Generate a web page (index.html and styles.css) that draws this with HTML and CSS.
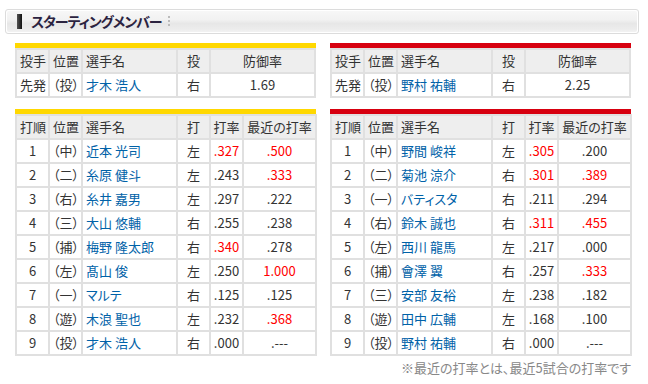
FILE: index.html
```html
<!DOCTYPE html>
<html lang="ja">
<head>
<meta charset="utf-8">
<link rel="stylesheet" href="styles.css">
</head>
<body>
<div class="page">
  <div class="title">
    <div class="title-inner">
      <span class="title-icon"></span>
      <span class="title-text">スターティングメンバー</span>
      <span class="title-dots"></span>
    </div>
  </div>

  <div class="row pitchers">
    <div class="team home">
      <table class="tbl">
        <colgroup><col class="c1"><col class="c2"><col class="c3"><col class="c4"><col class="c5w"></colgroup>
        <tr class="head"><th class="l">投手</th><th class="l">位置</th><th class="l">選手名</th><th>投</th><th>防御率</th></tr>
        <tr><td class="l">先発</td><td class="l">（投）</td><td class="l name">才木 浩人</td><td>右</td><td>1.69</td></tr>
      </table>
    </div>
    <div class="team away">
      <table class="tbl">
        <colgroup><col class="c1"><col class="c2"><col class="c3"><col class="c4"><col class="c5w"></colgroup>
        <tr class="head"><th class="l">投手</th><th class="l">位置</th><th class="l">選手名</th><th>投</th><th>防御率</th></tr>
        <tr><td class="l">先発</td><td class="l">（投）</td><td class="l name">野村 祐輔</td><td>右</td><td>2.25</td></tr>
      </table>
    </div>
  </div>

  <div class="row batters">
    <div class="team home">
      <table class="tbl">
        <colgroup><col class="c1"><col class="c2"><col class="c3"><col class="c4"><col class="c5"><col class="c6"></colgroup>
        <tr class="head"><th class="l">打順</th><th class="l">位置</th><th class="l">選手名</th><th>打</th><th>打率</th><th>最近の打率</th></tr>
        <tr><td>1</td><td class="l">（中）</td><td class="l name">近本 光司</td><td>左</td><td class="red">.327</td><td class="red">.500</td></tr>
        <tr><td>2</td><td class="l">（二）</td><td class="l name">糸原 健斗</td><td>左</td><td>.243</td><td class="red">.333</td></tr>
        <tr><td>3</td><td class="l">（右）</td><td class="l name">糸井 嘉男</td><td>左</td><td>.297</td><td>.222</td></tr>
        <tr><td>4</td><td class="l">（三）</td><td class="l name">大山 悠輔</td><td>右</td><td>.255</td><td>.238</td></tr>
        <tr><td>5</td><td class="l">（捕）</td><td class="l name">梅野 隆太郎</td><td>右</td><td class="red">.340</td><td>.278</td></tr>
        <tr><td>6</td><td class="l">（左）</td><td class="l name">髙山 俊</td><td>左</td><td>.250</td><td class="red">1.000</td></tr>
        <tr><td>7</td><td class="l">（一）</td><td class="l name">マルテ</td><td>右</td><td>.125</td><td>.125</td></tr>
        <tr><td>8</td><td class="l">（遊）</td><td class="l name">木浪 聖也</td><td>左</td><td>.232</td><td class="red">.368</td></tr>
        <tr><td>9</td><td class="l">（投）</td><td class="l name">才木 浩人</td><td>右</td><td>.000</td><td>.---</td></tr>
      </table>
    </div>
    <div class="team away">
      <table class="tbl">
        <colgroup><col class="c1"><col class="c2"><col class="c3"><col class="c4"><col class="c5"><col class="c6"></colgroup>
        <tr class="head"><th class="l">打順</th><th class="l">位置</th><th class="l">選手名</th><th>打</th><th>打率</th><th>最近の打率</th></tr>
        <tr><td>1</td><td class="l">（中）</td><td class="l name">野間 峻祥</td><td>左</td><td class="red">.305</td><td>.200</td></tr>
        <tr><td>2</td><td class="l">（二）</td><td class="l name">菊池 涼介</td><td>右</td><td class="red">.301</td><td class="red">.389</td></tr>
        <tr><td>3</td><td class="l">（一）</td><td class="l name">バティスタ</td><td>右</td><td>.211</td><td>.294</td></tr>
        <tr><td>4</td><td class="l">（右）</td><td class="l name">鈴木 誠也</td><td>右</td><td class="red">.311</td><td class="red">.455</td></tr>
        <tr><td>5</td><td class="l">（左）</td><td class="l name">西川 龍馬</td><td>左</td><td>.217</td><td>.000</td></tr>
        <tr><td>6</td><td class="l">（捕）</td><td class="l name">會澤 翼</td><td>右</td><td>.257</td><td class="red">.333</td></tr>
        <tr><td>7</td><td class="l">（三）</td><td class="l name">安部 友裕</td><td>左</td><td>.238</td><td>.182</td></tr>
        <tr><td>8</td><td class="l">（遊）</td><td class="l name">田中 広輔</td><td>左</td><td>.168</td><td>.100</td></tr>
        <tr><td>9</td><td class="l">（投）</td><td class="l name">野村 祐輔</td><td>右</td><td>.000</td><td>.---</td></tr>
      </table>
      <p class="note">※最近の打率とは、最近5試合の打率です</p>
    </div>
  </div>
</div>
</body>
</html>
```

FILE: styles.css
```css
html, body {
  margin: 0;
  padding: 0;
  background: #fff;
}
body {
  font-family: "Noto Sans CJK JP", "Noto Sans", sans-serif;
  font-size: 13px;
  color: #333;
  font-feature-settings: "palt";
}
.page {
  width: 648px;
  padding-top: 9px;
}
.title {
  margin: 0 9px 0 5px;
  border: 1px solid #dcdcdc;
  border-radius: 3px;
  height: 23px;
  box-sizing: content-box;
  background: #fff;
}
.title-inner {
  height: 21px;
  margin: 1px;
  border-radius: 2px;
  background: linear-gradient(#f7f7f7 0%, #f2f2f2 40%, #e7e7e7 60%, #ececec 85%, #f2f2f2 100%);
  display: flex;
  align-items: center;
}
.title-icon {
  width: 5px;
  height: 15px;
  margin-left: 10px;
  background: linear-gradient(90deg, #555, #111);
}
.title-text {
  margin-left: 9px;
  font-size: 14px;
  font-weight: bold;
  color: #2b2340;
  letter-spacing: -1px;
  line-height: 21px;
}
.title-dots {
  margin-left: 6px;
  width: 2px;
  height: 12px;
  background: repeating-linear-gradient(#bbb 0 2px, transparent 2px 4px);
}
.row {
  display: flex;
  gap: 14px;
  padding-left: 15px;
}
.pitchers {
  margin-top: 9px;
}
.batters {
  margin-top: 11px;
}
.team {
  width: 301px;
  align-self: flex-start;
}
.home {
  border-top: 5px solid #ffd800;
}
.away {
  border-top: 5px solid #d7000f;
}
.tbl {
  border-collapse: collapse;
  table-layout: fixed;
  width: 301px;
}
.c1, .c2, .c4, .c5 { width: 33px; }
.c3 { width: 95px; }
.c5w { width: 105px; }
.c6 { width: 73px; }
.tbl th, .tbl td {
  border: 2px solid #e0e0e0;
  height: 22px;
  padding: 0;
  text-align: center;
  font-weight: normal;
  line-height: 20px;
  white-space: nowrap;
  overflow: hidden;
}
.tbl .head th {
  background: #eeeeee;
}
.tbl .l {
  text-align: left;
  padding-left: 3px;
}
.tbl .name {
  color: #0062a8;
}
.tbl .red {
  color: #ff0000;
}
.note {
  margin: 3px 0 0;
  text-align: right;
  color: #888;
  font-size: 13px;
  line-height: 18px;
}
```
